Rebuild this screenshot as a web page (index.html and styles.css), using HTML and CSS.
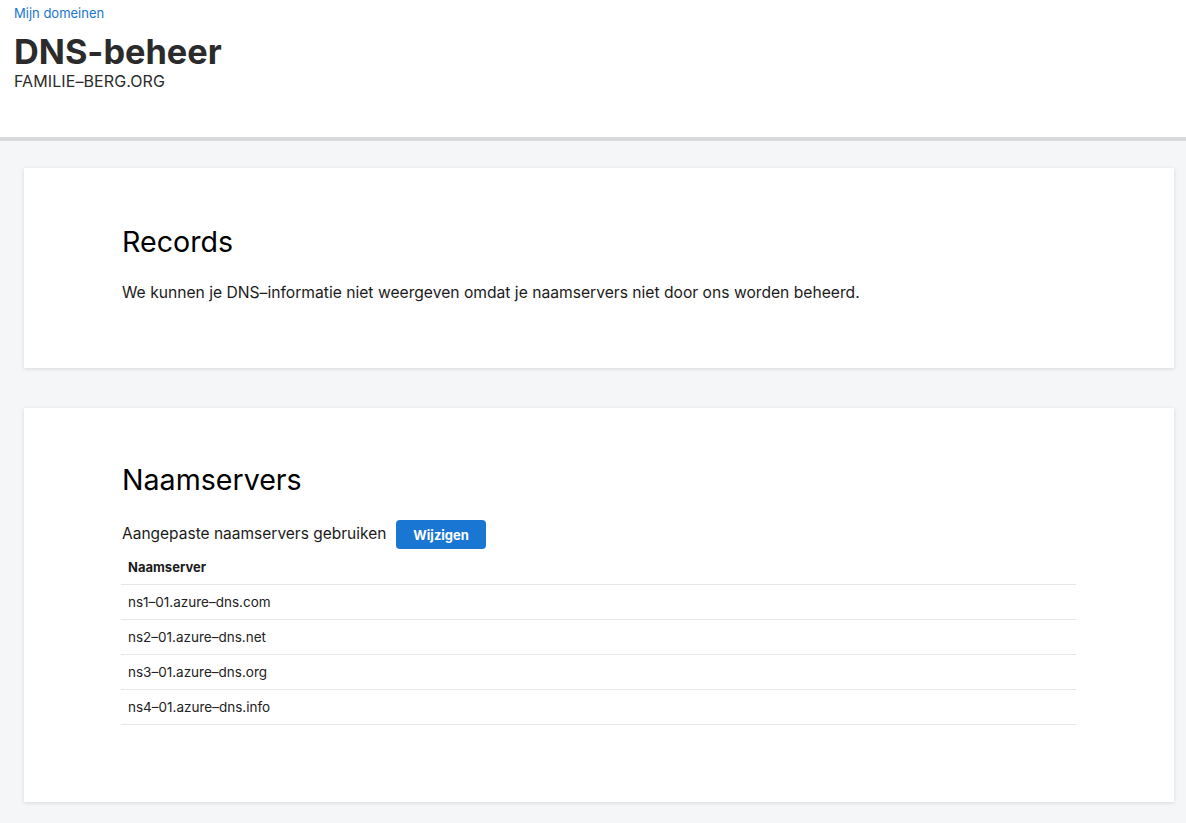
FILE: index.html
```html
<!DOCTYPE html>
<html lang="nl">
<head>
<meta charset="utf-8">
<title>DNS-beheer</title>
<link rel="stylesheet" href="styles.css">
</head>
<body>
<header class="page-header">
  <a class="crumb" href="#">Mijn domeinen</a>
  <h1 class="title">DNS-beheer</h1>
  <div class="domain">FAMILIE–BERG.ORG</div>
</header>
<main class="content">
  <section class="card card-records">
    <h2 class="card-title">Records</h2>
    <p class="card-text">We kunnen je DNS–informatie niet weergeven omdat je naamservers niet door ons worden beheerd.</p>
  </section>
  <section class="card card-ns">
    <h2 class="card-title">Naamservers</h2>
    <div class="ns-row">
      <span class="ns-label">Aangepaste naamservers gebruiken</span>
      <button class="btn" type="button">Wijzigen</button>
    </div>
    <table class="ns-table">
      <thead><tr><th>Naamserver</th></tr></thead>
      <tbody>
        <tr><td>ns1–01.azure–dns.com</td></tr>
        <tr><td>ns2–01.azure–dns.net</td></tr>
        <tr><td>ns3–01.azure–dns.org</td></tr>
        <tr><td>ns4–01.azure–dns.info</td></tr>
      </tbody>
    </table>
  </section>
</main>
</body>
</html>
```
FILE: styles.css
```css
* { box-sizing: border-box; }
html, body { margin: 0; padding: 0; }
body {
  font-family: Inter, "Liberation Sans", sans-serif;
  color: #1b1b1b;
  background: #f5f6f8;
  min-height: 823px;
}
.page-header {
  background: #fff;
  border-bottom: 4px solid #d9dadc;
  height: 141px;
  padding: 4px 14px 0;
}
.crumb {
  display: block;
  color: #1976d2;
  text-decoration: none;
  font-size: 13px;
  line-height: 18px;
}
.title {
  margin: 8px 0 0;
  font-size: 34.3px;
  line-height: 44px;
  font-weight: 700;
  color: #2b2b2b;
}
.domain {
  margin-top: -2px;
  font-size: 16px;
  line-height: 18px;
  color: #2b2b2b;
  letter-spacing: 0.1px;
}
.content {
  padding: 27px 12px 20px 24px;
  display: flex;
  flex-direction: column;
  gap: 40px;
}
.card {
  background: #fff;
  box-shadow: 0 1px 4px rgba(0,0,0,0.12);
  padding: 0 98px;
}
.card-records { height: 200px; padding-top: 56px; }
.card-ns { height: 394px; padding-top: 54px; }
.card-title {
  margin: 0;
  font-size: 28.6px;
  line-height: 36px;
  font-weight: 400;
  color: #000;
}
.card-text {
  margin: 22px 0 0;
  font-size: 15.65px;
  line-height: 22px;
  color: #1b1b1b;
}
.ns-row {
  display: flex;
  align-items: center;
  gap: 10px;
  margin-top: 22px;
}
.ns-label { font-size: 15.5px; color: #1b1b1b; margin-top: -3px; }
.btn {
  background: #1976d2;
  color: #fff;
  border: 0;
  border-radius: 4px;
  height: 29px;
  padding: 0 17px;
  font-family: inherit;
  font-weight: 700;
  font-size: 13px;
}
.ns-table {
  width: 955px;
  margin-left: -1px;
  border-collapse: collapse;
  margin-top: 2px;
}
.ns-table th {
  text-align: left;
  font-size: 13px;
  font-weight: 700;
  height: 33px;
  padding: 0 7px;
  border-bottom: 1px solid #e6e6e6;
}
.ns-table td {
  font-size: 13.5px;
  height: 35px;
  padding: 0 7px;
  border-bottom: 1px solid #e6e6e6;
  color: #222;
}
```
